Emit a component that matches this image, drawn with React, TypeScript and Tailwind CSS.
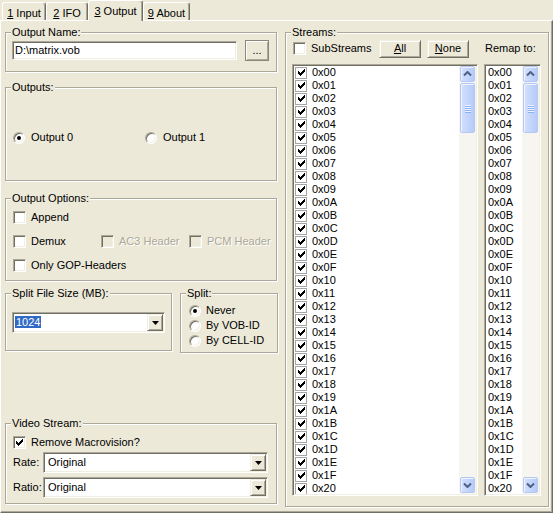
import React from "react";

const sunken =
  "border border-t-[#aca899] border-l-[#aca899] border-r-white border-b-white shadow-[inset_1px_1px_0_#716f64,inset_-1px_-1px_0_#f1efe2]";
const raised =
  "border border-t-[#f1efe2] border-l-[#f1efe2] border-r-[#716f64] border-b-[#716f64] shadow-[inset_1px_1px_0_#fff,inset_-1px_-1px_0_#aca899]";

const STREAMS = Array.from(
  { length: 33 },
  (_, i) => "0x" + i.toString(16).toUpperCase().padStart(2, "0")
);

// classic 7x7 check mark, one rect per pixel run
const TICK = [
  [6, 0, 1],
  [5, 1, 2],
  [0, 2, 1],
  [4, 2, 3],
  [0, 3, 2],
  [3, 3, 3],
  [0, 4, 5],
  [1, 5, 3],
  [2, 6, 1],
];

function Tick({ color = "#000" }: { color?: string }) {
  return (
    <svg width="7" height="7" viewBox="0 0 7 7" shapeRendering="crispEdges">
      {TICK.map(([x, y, w]) => (
        <rect key={`${x}-${y}`} x={x} y={y} width={w} height={1} fill={color} />
      ))}
    </svg>
  );
}

function Group({
  title,
  className = "",
  children,
}: {
  title: string;
  className?: string;
  children?: React.ReactNode;
}) {
  return (
    <fieldset
      className={`min-w-0 shrink-0 border border-[#aca899] shadow-[1px_1px_0_#fff,inset_1px_1px_0_#fff] ${className}`}
    >
      <legend className="ml-[5px] bg-[#ece9d8] px-[1px] leading-[13px]">{title}</legend>
      {children}
    </fieldset>
  );
}

function Check({ checked = false, disabled = false }: { checked?: boolean; disabled?: boolean }) {
  return (
    <span
      className={`flex h-[13px] w-[13px] shrink-0 items-center justify-center ${sunken} ${
        disabled ? "bg-[#ece9d8]" : "bg-white"
      }`}
    >
      {checked && <Tick />}
    </span>
  );
}

function CheckLabel({
  label,
  checked = false,
  disabled = false,
  className = "",
}: {
  label: string;
  checked?: boolean;
  disabled?: boolean;
  className?: string;
}) {
  return (
    <label className={`flex h-[13px] shrink-0 items-center ${className}`}>
      <Check checked={checked} disabled={disabled} />
      <span
        className={`ml-[5px] whitespace-nowrap ${
          disabled ? "text-[#aca899] [text-shadow:1px_1px_0_#fff]" : ""
        }`}
      >
        {label}
      </span>
    </label>
  );
}

function Radio({ checked = false }: { checked?: boolean }) {
  return (
    <span className="flex h-[12px] w-[12px] shrink-0 items-center justify-center rounded-full border border-t-[#aca899] border-l-[#aca899] border-r-white border-b-white bg-white shadow-[inset_1px_1px_0_#716f64,inset_-1px_-1px_0_#f1efe2]">
      {checked && <span className="h-[4px] w-[4px] rounded-full bg-black" />}
    </span>
  );
}

function Btn({ className = "", children }: { className?: string; children: React.ReactNode }) {
  return (
    <button
      type="button"
      className={`flex shrink-0 items-center justify-center bg-[#ece9d8] leading-[13px] ${raised} ${className}`}
    >
      {children}
    </button>
  );
}

function Combo({
  value,
  selected = false,
  className = "",
}: {
  value: string;
  selected?: boolean;
  className?: string;
}) {
  return (
    <div className={`flex h-[21px] shrink-0 items-center bg-white p-[1px] ${sunken} ${className}`}>
      <span className="flex-1 pl-[1px]">
        <span className={selected ? "bg-[#316ac5] px-[1px] text-white" : "pl-[2px]"}>{value}</span>
      </span>
      <span className={`flex h-[17px] w-[16px] items-center justify-center bg-[#ece9d8] ${raised}`}>
        <svg width="7" height="4" viewBox="0 0 7 4">
          <polygon points="0,0 7,0 3.5,4" fill="#000" />
        </svg>
      </span>
    </div>
  );
}

function Arrow({ down = false }: { down?: boolean }) {
  return (
    <svg width="9" height="6" viewBox="0 0 9 6">
      <path
        d={down ? "M1 1.5 L4.5 5 L8 1.5" : "M1 4.5 L4.5 1 L8 4.5"}
        fill="none"
        stroke="#4d6185"
        strokeWidth="2"
      />
    </svg>
  );
}

function ScrollBar() {
  const btn =
    "flex items-center justify-center rounded-[2px] border border-[#b5c8f4] bg-linear-to-r from-[#d3e0fd] to-[#b6cbf8] shadow-[inset_1px_1px_0_#eef3fe]";
  return (
    <div className="flex w-[17px] shrink-0 flex-col bg-[#f6f5f0] px-[1px]">
      <div className={`h-[16px] ${btn}`}>
        <Arrow />
      </div>
      <div className={`mt-[1px] h-[50px] flex-col gap-[1px] ${btn}`}>
        {[0, 1, 2, 3].map((i) => (
          <span key={i} className="h-[1px] w-[6px] bg-[#eef4fe] shadow-[0_1px_0_#8cb0f8]" />
        ))}
      </div>
      <div className="flex-1" />
      <div className={`mb-[1px] h-[16px] ${btn}`}>
        <Arrow down />
      </div>
    </div>
  );
}

function StreamList({ checks = false, className = "" }: { checks?: boolean; className?: string }) {
  return (
    <div className={`flex h-[432px] shrink-0 overflow-hidden bg-white p-[1px] ${sunken} ${className}`}>
      <div className="flex-1 overflow-hidden">
        {STREAMS.map((id) => (
          <div key={id} className={`flex h-[13px] items-center ${checks ? "pl-[1px]" : "pl-[2px]"}`}>
            {checks && (
              <span className="mr-[5px] flex h-[12px] w-[12px] items-center justify-center border border-[#a5a5a5] bg-white">
                <Tick />
              </span>
            )}
            <span>{id}</span>
          </div>
        ))}
      </div>
      <ScrollBar />
    </div>
  );
}

function Tab({
  hot,
  label,
  className,
  active = false,
}: {
  hot: string;
  label: string;
  className: string;
  active?: boolean;
}) {
  return (
    <div
      className={`relative shrink-0 rounded-t-[3px] border-t border-l border-r border-t-white border-l-white border-r-[#716f64] bg-[#ece9d8] pt-[4px] text-center shadow-[inset_-1px_0_0_#aca899] ${
        active ? "z-10 -mb-px h-[21px]" : "h-[18px]"
      } ${className}`}
    >
      <span className="underline underline-offset-[1px]">{hot}</span>
      {label}
    </div>
  );
}

export default function App() {
  return (
    <div className="flex h-[513px] w-[553px] flex-col overflow-hidden bg-[#ece9d8] text-[11px] leading-[13px] text-black [font-family:'Liberation_Sans',Arial,sans-serif]">
      <div className="flex h-[20px] shrink-0 items-end pl-[2px]">
        <Tab hot="1" label=" Input" className="w-[44px]" />
        <Tab hot="2" label=" IFO" className="w-[42px]" />
        <Tab hot="3" label=" Output" className="w-[55px]" active />
        <Tab hot="9" label=" About" className="w-[47px]" />
      </div>

      <div className="flex flex-1 border border-t-white border-l-white border-r-[#716f64] border-b-[#716f64] pl-[4px] pt-[5px] shadow-[inset_-1px_-1px_0_#aca899]">
        <div className="flex w-[272px] shrink-0 flex-col">
          <Group title="Output Name:" className="h-[46px]">
            <div className="flex items-start pl-[6px] pt-[2px]">
              <div className={`flex h-[19px] w-[225px] items-center bg-white pl-[2px] ${sunken}`}>
                {"D:\\matrix.vob"}
              </div>
              <Btn className="ml-[8px] mt-[-1px] h-[21px] w-[24px] outline outline-1 outline-[#8a887c] -outline-offset-1">
                ...
              </Btn>
            </div>
          </Group>

          <Group title="Outputs:" className="mt-[9px] h-[100px]">
            <div className="flex pl-[7px] pt-[37px]">
              <label className="flex w-[132px] items-center">
                <Radio checked />
                <span className="ml-[6px]">Output 0</span>
              </label>
              <label className="flex items-center">
                <Radio />
                <span className="ml-[6px]">Output 1</span>
              </label>
            </div>
          </Group>

          <Group title="Output Options:" className="mt-[11px] h-[89px]">
            <div className="flex flex-col gap-[11px] pl-[7px] pt-[6px]">
              <CheckLabel label="Append" />
              <div className="flex">
                <CheckLabel label="Demux" className="w-[88px]" />
                <CheckLabel label="AC3 Header" disabled className="w-[88px]" />
                <CheckLabel label="PCM Header" disabled />
              </div>
              <CheckLabel label="Only GOP-Headers" />
            </div>
          </Group>

          <div className="mt-[6px] flex items-start">
            <Group title="Split File Size (MB):" className="h-[64px] w-[167px]">
              <div className="pl-[6px] pt-[12px]">
                <Combo value="1024" selected className="w-[153px]" />
              </div>
            </Group>
            <Group title="Split:" className="ml-[8px] h-[66px] w-[98px]">
              <div className="flex flex-col pl-[8px] pt-[3px]">
                {["Never", "By VOB-ID", "By CELL-ID"].map((t, i) => (
                  <label key={t} className="flex h-[15px] items-center">
                    <Radio checked={i === 0} />
                    <span className="ml-[5px] whitespace-nowrap">{t}</span>
                  </label>
                ))}
              </div>
            </Group>
          </div>

          <Group title="Video Stream:" className="mt-[64px] h-[87px]">
            <div className="pl-[7px] pt-[6px]">
              <CheckLabel label="Remove Macrovision?" checked />
              <div className="mt-[3px] flex items-center">
                <span className="w-[30px]">Rate:</span>
                <Combo value="Original" className="w-[225px]" />
              </div>
              <div className="mt-[4px] flex items-center">
                <span className="w-[30px]">Ratio:</span>
                <Combo value="Original" className="w-[225px]" />
              </div>
            </div>
          </Group>
        </div>

        <Group title="Streams:" className="ml-[8px] h-[481px] w-[264px]">
          <div className="flex h-[19px] items-center pl-[7px]">
            <CheckLabel label="SubStreams" className="w-[86px]" />
            <Btn className="h-[18px] w-[42px]">
              <span className="underline underline-offset-[1px]">A</span>ll
            </Btn>
            <Btn className="ml-[6px] h-[18px] w-[42px]">
              <span className="underline underline-offset-[1px]">N</span>one
            </Btn>
            <span className="ml-[16px] whitespace-nowrap">Remap to:</span>
          </div>
          <div className="mt-[6px] flex pl-[6px]">
            <StreamList checks className="w-[186px]" />
            <StreamList className="ml-[6px] w-[57px]" />
          </div>
        </Group>
      </div>
    </div>
  );
}
